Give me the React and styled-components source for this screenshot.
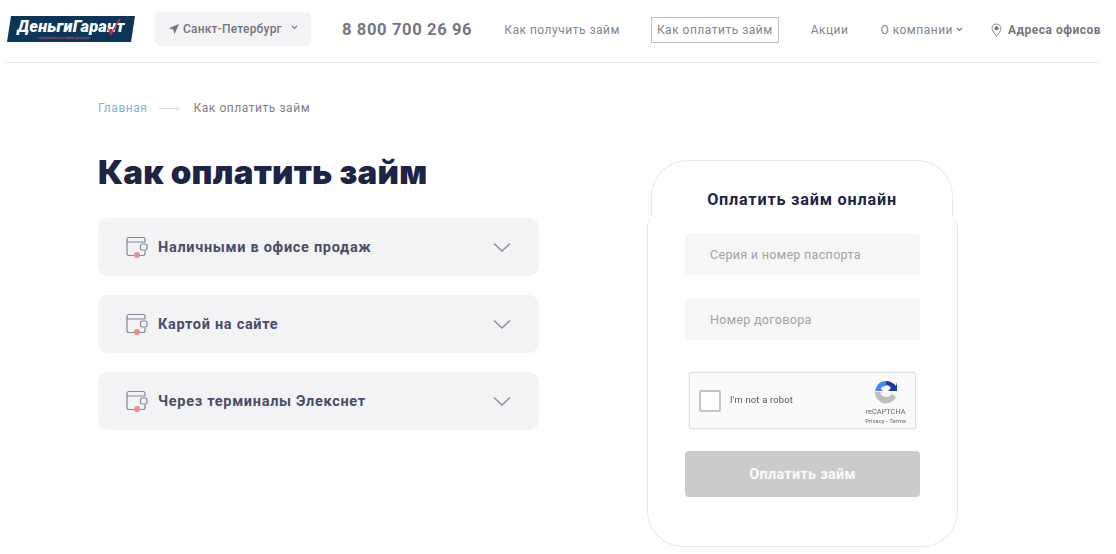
import React from "react";
import styled, { createGlobalStyle } from "styled-components";

const Global = createGlobalStyle`
  html, body { margin: 0; padding: 0; background: #fff; }
  body { font-family: Roboto, "Liberation Sans", sans-serif; width: 1116px; height: 554px; overflow: hidden; }
  * { box-sizing: border-box; }
`;

const Header = styled.header`
  display: flex; align-items: center; height: 63px; margin: 0 15px 0 5px;
  border-bottom: 1px solid #e6e6e8; white-space: nowrap; padding-bottom: 4px;
  & > * { flex-shrink: 0; }
`;
const Logo = styled.div`
  position: relative; width: 128px; height: 26px; margin: 0 0 0 2px; padding-top: 4px; background: #0d3559;
  clip-path: polygon(4px 0, 100% 0, 124px 100%, 0 100%);
  display: flex; flex-direction: column; align-items: center; justify-content: flex-start; color: #fff;
`;
const LogoName = styled.span`
  font: italic 900 16.4px/14px Roboto, sans-serif; letter-spacing: 0.25px;
`;
const LogoSub = styled.span`
  margin: 2px 14px 0 0; font: 400 3.4px/4px Roboto, sans-serif; color: #d9545f;
`;
const LogoCheck = styled.svg`
  position: absolute; left: 97px; top: 1px;
`;
const City = styled.button`
  display: flex; align-items: center; width: 156px; height: 34px; margin-left: 20px; padding: 0 0 0 14px;
  border: 0; border-radius: 5px; background: #f3f3f6; color: #73737f;
  font: 500 12px Roboto, sans-serif; letter-spacing: 0.2px;
`;
const CityName = styled.span` margin-left: 4px; `;
const Phone = styled.a`
  margin-left: 31px; color: #767684; font: 700 16.6px Roboto, sans-serif; letter-spacing: 0.6px;
`;
const NavLink = styled.a`
  display: flex; align-items: center; gap: 3px; margin-left: ${p => p.$gap}px; padding-top: 1px; color: #85858f;
  font: 400 12px Roboto, sans-serif; letter-spacing: 0.5px;
`;
const ActiveLink = styled.a`
  margin-left: 31px; padding: 0 5px; height: 26px; border: 1px solid #bdbdbd; color: #85858f;
  font: 400 12px/25px Roboto, sans-serif; letter-spacing: 0.5px; position: relative; top: 1px;
`;
const Offices = styled.a`
  display: flex; align-items: center; gap: 6px; margin-left: 28px; padding-top: 1px; color: #767684;
  font: 700 12px Roboto, sans-serif; letter-spacing: 0.5px;
`;

const Main = styled.main`
  display: flex; align-items: flex-start; padding: 0 0 0 98px;
`;
const Left = styled.div` width: 441px; padding-top: 38px; `;
const Crumbs = styled.nav`
  display: flex; align-items: center; font: 400 12px Roboto, sans-serif; letter-spacing: 0.55px; color: #808088;
`;
const CrumbLink = styled.a` color: #7fb4d3; `;
const CrumbArrow = styled.svg` margin: 0 13px 0 12px; `;
const Title = styled.h1`
  margin: 37px 0 0; font: 900 33px/40px Inter, sans-serif; letter-spacing: 0.25px; color: #1d2446; white-space: nowrap;
`;
const List = styled.div` display: flex; flex-direction: column; gap: 19px; margin-top: 26px; `;
const Row = styled.div`
  display: flex; align-items: center; height: 58px; padding: 0 28px 0 28px; border-radius: 10px; background: #f3f3f6;
`;
const RowLabel = styled.span`
  flex: 1; margin-left: 10px; color: #4a4c66; font: 700 14.5px Roboto, sans-serif; letter-spacing: 0.7px;
`;

const Card = styled.aside`
  width: 311px; margin: 97px 0 0 108px;
`;
const CardCap = styled.div`
  height: 56px; margin: 0 5px 0 4px; padding-top: 29px; border: 1px solid #e8e8e8; border-bottom: 0;
  border-radius: 36px 36px 0 0; text-align: center; color: #1d2446;
  font: 700 16.2px/20px Roboto, sans-serif; letter-spacing: 0.8px;
`;
const CardBody = styled.div`
  height: 331px; padding: 18px 37px 0; border: 1px solid #e8e8e8; border-top: 0; border-radius: 10px 10px 36px 36px;
  display: flex; flex-direction: column;
`;
const Field = styled.div`
  height: 41px; margin-bottom: 24px; padding-left: 25px; border-radius: 4px; background: #f6f6f6; color: #a2a2a6;
  font: 400 12.6px/41px Roboto, sans-serif; letter-spacing: 0.27px;
`;
const Captcha = styled.div`
  position: relative; display: flex; align-items: center; width: 227px; height: 57px; margin: 8px 0 0 4px;
  border: 1px solid #dedede; border-radius: 2px; background: #fafafa; box-shadow: 0 0 3px rgba(0,0,0,.1);
  filter: blur(0.35px);
`;
const CheckBox = styled.span`
  width: 22px; height: 22px; margin-left: 9px; border: 2px solid #c4c4c4; border-radius: 2px; background: #fff;
`;
const CaptchaText = styled.span`
  margin: -2px 0 0 9px; color: #555; font: 400 9.4px Roboto, sans-serif; letter-spacing: 0.2px;
`;
const Brand = styled.div`
  position: absolute; right: 9px; top: 7px; display: flex; flex-direction: column; align-items: center; color: #666;
`;
const BrandName = styled.span` font: 400 7.4px/9px Roboto, sans-serif; margin-top: 3px; `;
const BrandLinks = styled.span` font: 400 6px/9px Roboto, sans-serif; `;
const PayButton = styled.button`
  height: 46px; margin-top: 22px; border: 0; border-radius: 4px; background: #cbcbcb; color: #fbfbfb;
  font: 700 14.4px Roboto, sans-serif; letter-spacing: 0.3px;
`;

const Wallet = () => (
  <svg width="22" height="22" viewBox="0 0 22 22" fill="none">
    <path d="M19 6V3.5C19 2.1 18 1.5 17 1.5H3C1.8 1.5 1 2.3 1 3.5V17.5C1 18.7 1.8 19.5 3 19.5H8M14 19.5H17C18 19.5 19 18.7 19 17.5V14.5M1 4.5C1 5.5 2 6 3 6H19"
      stroke="#85859a" strokeWidth="1.2" />
    <rect x="14.5" y="8" width="6.5" height="6" rx="1.5" stroke="#85859a" strokeWidth="1.2" fill="#f3f3f6" />
    <circle cx="11" cy="19" r="3" fill="#e88a92" />
  </svg>
);
const Chevron = () => (
  <svg width="18" height="11" viewBox="0 0 18 11" fill="none">
    <path d="M1 1.5L9 9L17 1.5" stroke="#8f8f9c" strokeWidth="1.6" />
  </svg>
);
const Caret = ({ className }) => (
  <svg className={className} width="7" height="5" viewBox="0 0 7 5" fill="none">
    <path d="M1 1L3.5 3.5L6 1" stroke="#73737f" strokeWidth="1.1" />
  </svg>
);
const StyledCaret = styled(Caret)` margin-left: 9px; margin-top: -3px; `;

const rows = ["Наличными в офисе продаж", "Картой на сайте", "Через терминалы Элекснет"];

export default function App() {
  return (
    <>
      <Global />
      <Header>
        <Logo>
          <LogoName>ДеньгиГарант</LogoName>
          <LogoSub>первоклассные займы для всех</LogoSub>
          <LogoCheck width="17" height="18" viewBox="0 0 17 18" fill="none">
            <path d="M3 10L7 17L16 2" stroke="#d8323f" strokeWidth="1.5" />
          </LogoCheck>
        </Logo>
        <City>
          <svg width="10" height="10" viewBox="0 0 10 10"><path d="M10 0L0 4.2L4.2 5.6L5.6 10Z" fill="#73737f" /></svg>
          <CityName>Санкт-Петербург</CityName>
          <StyledCaret />
        </City>
        <Phone>8 800 700 26 96</Phone>
        <NavLink $gap={32}>Как получить займ</NavLink>
        <ActiveLink>Как оплатить займ</ActiveLink>
        <NavLink $gap={32}>Акции</NavLink>
        <NavLink $gap={32}>О компании <Caret /></NavLink>
        <Offices>
          <svg width="11" height="14" viewBox="0 0 11 14" fill="none">
            <path d="M5.5 13C3.5 10.5 1 8 1 5.2C1 2.8 3 1 5.5 1C8 1 10 2.8 10 5.2C10 8 7.5 10.5 5.5 13Z" stroke="#85858f" />
            <circle cx="5.5" cy="5.2" r="2" fill="#767684" />
          </svg>
          Адреса офисов
        </Offices>
      </Header>
      <Main>
        <Left>
          <Crumbs>
            <CrumbLink>Главная</CrumbLink>
            <CrumbArrow width="21" height="7" viewBox="0 0 21 7" fill="none">
              <path d="M0 3.5H20M17 .5L20 3.5L17 6.5" stroke="#d4d4d8" strokeWidth=".8" />
            </CrumbArrow>
            <span>Как оплатить займ</span>
          </Crumbs>
          <Title>Как оплатить займ</Title>
          <List>
            {rows.map(r => (
              <Row key={r}>
                <Wallet />
                <RowLabel>{r}</RowLabel>
                <Chevron />
              </Row>
            ))}
          </List>
        </Left>
        <Card>
          <CardCap>Оплатить займ онлайн</CardCap>
          <CardBody>
            <Field>Серия и номер паспорта</Field>
            <Field>Номер договора</Field>
            <Captcha>
              <CheckBox />
              <CaptchaText>I'm not a robot</CaptchaText>
              <Brand>
                <svg width="24" height="24" viewBox="0 0 24 24" fill="none">
                  <path d="M23 11H14L17 8A6 6 0 0 0 12 5V1C16 1 20 3 22 6L23 2Z" fill="#1c3aa9" />
                  <path d="M12 1A11 11 0 0 0 2 8L1 11H9L6.5 8.5A6 6 0 0 1 12 6Z" fill="#4285f4" />
                  <path d="M1 12A11 11 0 0 0 22 17L18 14A7 7 0 0 1 6 13L9 12Z" fill="#bdbdbd" />
                </svg>
                <BrandName>reCAPTCHA</BrandName>
                <BrandLinks>Privacy - Terms</BrandLinks>
              </Brand>
            </Captcha>
            <PayButton>Оплатить займ</PayButton>
          </CardBody>
        </Card>
      </Main>
    </>
  );
}
